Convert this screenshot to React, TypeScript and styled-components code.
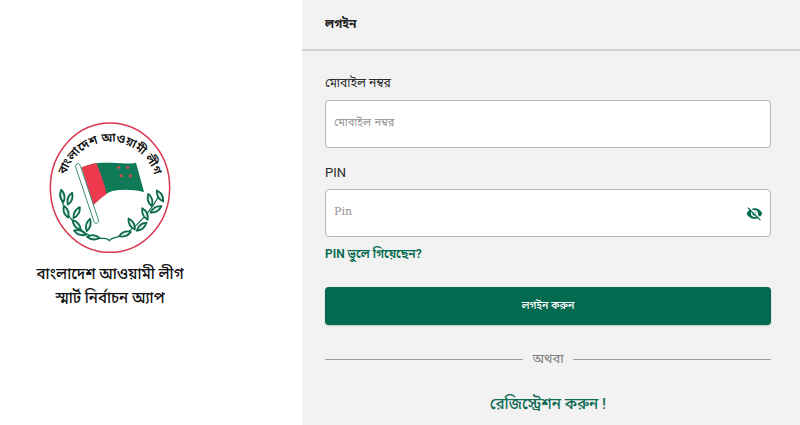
import React from "react";
import styled, { createGlobalStyle } from "styled-components";
import { MdVisibilityOff } from "react-icons/md";

const bengali = `"Noto Sans Bengali", "Noto Serif Bengali", "Lohit Bengali", "Noto Sans", sans-serif`;

const Global = createGlobalStyle`
  html, body { margin: 0; padding: 0; background: #fff; }
  body { font-family: Roboto, ${bengali}; }
  * { box-sizing: border-box; }
`;

const Page = styled.div`
  display: grid;
  grid-template-columns: 302px 1fr;
  width: 800px;
  height: 425px;
  overflow: hidden;
`;

const Brand = styled.aside`
  display: flex;
  flex-direction: column;
  align-items: center;
  padding: 110px 82px 0 0;
  background: #fff;
`;

const LogoSvg = styled.svg`
  display: block;
  width: 170px;
  height: 150px;
`;

const BrandTitle = styled.h1`
  margin: 2px 0 0;
  font-size: 15px;
  line-height: 24px;
  font-weight: 500;
  color: #111;
  text-align: center;
  white-space: nowrap;
`;

const Panel = styled.main`
  display: flex;
  flex-direction: column;
  background: #f2f2f2;
`;

const PanelHeader = styled.header`
  height: 51px;
  padding: 15px 23px 0;
  border-bottom: 2px solid #d2d2d2;
  font-size: 12px;
  line-height: 18px;
  font-weight: 700;
  color: #222;
`;

const Form = styled.form`
  display: flex;
  flex-direction: column;
  padding: 0 29px 0 23px;
`;

const Label = styled.label<{ $top: number; $size: number; $line: number }>`
  margin-top: ${(p) => p.$top}px;
  height: 20px;
  font-size: ${(p) => p.$size}px;
  line-height: ${(p) => p.$line}px;
  color: #2b2b2b;
`;

const InputBox = styled.div`
  display: flex;
  align-items: center;
  height: 48px;
  margin-top: 8px;
  padding: 0 7px 0 8px;
  background: #fff;
  border: 1px solid #b5b5b5;
  border-radius: 4px;
`;

const Input = styled.input`
  flex: 1;
  min-width: 0;
  margin-top: -4px;
  border: 0;
  outline: 0;
  padding: 0;
  background: transparent;
  font-family: "DejaVu Serif", ${bengali};
  font-size: 11px;
  &::placeholder { color: #929292; opacity: 1; }
`;

const EyeButton = styled.button`
  display: flex;
  padding: 0;
  border: 0;
  background: none;
  color: #03694f;
  font-size: 17px;
`;

const ForgotLink = styled.a`
  margin-top: 7px;
  height: 20px;
  font-size: 12px;
  line-height: 20px;
  font-weight: 600;
  color: #03694f;
`;

const Submit = styled.button`
  height: 38px;
  margin-top: 23px;
  border: 0;
  border-radius: 4px;
  background: #03694f;
  color: #fff;
  font-family: inherit;
  font-size: 10.5px;
  font-weight: 500;
  box-shadow: 0 1px 2px rgba(0, 0, 0, 0.2);
`;

const OrRow = styled.div`
  display: flex;
  align-items: center;
  gap: 9px;
  margin-top: 24px;
  height: 20px;
  font-size: 13px;
  color: #808080;
  &::before, &::after {
    content: "";
    flex: 1;
    height: 1px;
    background: #9c9c9c;
  }
`;

const RegisterLink = styled.a`
  margin-top: 23px;
  text-align: center;
  font-size: 15.2px;
  line-height: 24px;
  font-weight: 500;
  color: #0f6a52;
`;

const leaves: [number, number, number][] = [
  [97, 258, 80], [120, 266, 110], [108, 305, 70], [140, 308, 120], [140, 345, 50], [175, 345, 105], [150, 368, 20], [190, 382, 5],
  [360, 270, 75], [390, 258, 60], [378, 298, 150], [345, 312, 65], [335, 350, 140], [305, 342, 60], [285, 372, 160],
];

const Logo = () => (
  <LogoSvg viewBox="-15 0 510 450" aria-label="logo">
    <ellipse cx="240" cy="233" rx="179" ry="194" fill="#fff" stroke="#d9374f" strokeWidth="4.5" />
    <defs>
      <path id="arc" d="M 100 240 A 140 145 0 0 1 380 240" />
    </defs>
    <text fontSize="36" fontWeight="600" fill="#111" fontFamily={bengali} textAnchor="middle">
      <textPath href="#arc" startOffset="50%">বাংলাদেশ আওয়ামী লীগ</textPath>
    </text>
    <path d="M155 172 C175 165 190 160 200 160 C240 155 290 165 318 158 L342 246 C310 238 280 238 250 242 C225 248 205 270 190 286 Z" fill="#0f7a57" />
    <path d="M155 172 C175 165 190 160 200 160 C210 190 222 215 230 252 C215 262 200 275 190 286 Z" fill="#ee3a4e" />
    <circle cx="266" cy="172" r="5" fill="#c2534f" />
    <circle cx="293" cy="172" r="5" fill="#c2534f" />
    <circle cx="274" cy="197" r="5" fill="#c2534f" />
    <circle cx="301" cy="197" r="5" fill="#c2534f" />
    <path d="M136 168 Q146 152 152 170 L206 332 Q200 348 192 335 Z" fill="#fff" stroke="#3f8a72" strokeWidth="3" />
    <path d="M90 250 C100 310 150 375 205 385 C220 387 232 380 238 392 C246 378 270 385 290 370 C330 340 365 300 392 248" fill="none" stroke="#0b6b4c" strokeWidth="3.5" />
    {leaves.map(([x, y, r], i) => (
      <path key={i} d="M-19 0 Q0 -13 19 0 Q0 13 -19 0 Z" transform={`translate(${x} ${y}) rotate(${r})`} fill="#dfeee8" stroke="#0b6b4c" strokeWidth="5.5" strokeLinejoin="round" />
    ))}
  </LogoSvg>
);

export default function App() {
  return (
    <Page>
      <Global />
      <Brand>
        <Logo />
        <BrandTitle>
          বাংলাদেশ আওয়ামী লীগ
          <br />
          স্মার্ট নির্বাচন অ্যাপ
        </BrandTitle>
      </Brand>
      <Panel>
        <PanelHeader>লগইন</PanelHeader>
        <Form onSubmit={(e) => e.preventDefault()}>
          <Label $top={21} $size={12.2} $line={22}>মোবাইল নম্বর</Label>
          <InputBox>
            <Input placeholder="মোবাইল নম্বর" />
          </InputBox>
          <Label $top={13} $size={13} $line={24}>PIN</Label>
          <InputBox>
            <Input placeholder="Pin" type="password" />
            <EyeButton type="button" aria-label="show pin">
              <MdVisibilityOff />
            </EyeButton>
          </InputBox>
          <ForgotLink>PIN ভুলে গিয়েছেন?</ForgotLink>
          <Submit>লগইন করুন</Submit>
          <OrRow>অথবা</OrRow>
          <RegisterLink>রেজিস্ট্রেশন করুন !</RegisterLink>
        </Form>
      </Panel>
    </Page>
  );
}
